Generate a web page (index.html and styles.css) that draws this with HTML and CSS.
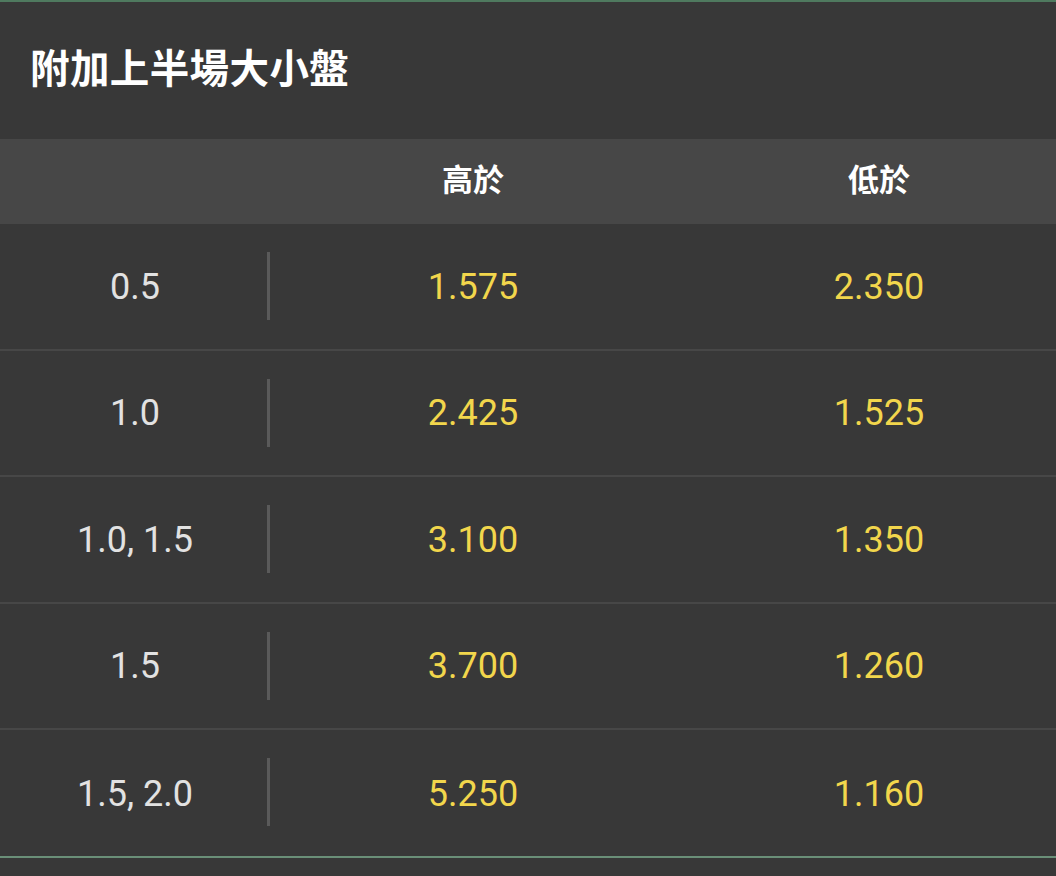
FILE: index.html
```html
<!DOCTYPE html>
<html lang="zh-Hant">
<head>
<meta charset="utf-8">
<link rel="stylesheet" href="styles.css">
</head>
<body>
<div class="panel">
  <div class="title">附加上半場大小盤</div>
  <div class="thead">
    <div class="cell"></div>
    <div class="cell">高於</div>
    <div class="cell">低於</div>
  </div>
  <div class="row">
    <div class="cell line">0.5</div>
    <div class="cell odd">1.575</div>
    <div class="cell odd">2.350</div>
  </div>
  <div class="row">
    <div class="cell line">1.0</div>
    <div class="cell odd">2.425</div>
    <div class="cell odd">1.525</div>
  </div>
  <div class="row">
    <div class="cell line">1.0, 1.5</div>
    <div class="cell odd">3.100</div>
    <div class="cell odd">1.350</div>
  </div>
  <div class="row">
    <div class="cell line">1.5</div>
    <div class="cell odd">3.700</div>
    <div class="cell odd">1.260</div>
  </div>
  <div class="row last">
    <div class="cell line">1.5, 2.0</div>
    <div class="cell odd">5.250</div>
    <div class="cell odd">1.160</div>
  </div>
</div>
</body>
</html>
```

FILE: styles.css
```css
html, body {
  margin: 0;
  padding: 0;
  background: #383838;
  overflow: hidden;
}
body {
  width: 1056px;
  height: 876px;
  font-family: Roboto, "Noto Sans CJK TC", sans-serif;
}
.panel {
  border-top: 2px solid #4f7a5f;
  border-bottom: 2px solid #6a8f78;
  background: #383838;
}
.title {
  height: 137px;
  box-sizing: border-box;
  padding-left: 30px;
  display: flex;
  align-items: center;
  padding-bottom: 10px;
  color: #ffffff;
  font-family: "Noto Sans CJK TC", sans-serif;
  font-weight: 700;
  font-size: 39.5px;
  letter-spacing: 0.4px;
}
.thead, .row {
  display: grid;
  grid-template-columns: 270px 406px 406px;
}
.thead {
  height: 85px;
  background: #474747;
  color: #ffffff;
  font-family: "Noto Sans CJK TC", sans-serif;
  font-weight: 700;
  font-size: 31px;
}
.thead .cell {
  display: flex;
  align-items: center;
  justify-content: center;
  padding-bottom: 8px;
}
.row {
  height: 124.5px;
  border-bottom: 2px solid #474747;
}
.row.last {
  border-bottom: none;
  height: 126px;
}
.row .cell {
  display: flex;
  align-items: center;
  justify-content: center;
  font-size: 36px;
  padding-top: 1px;
}
.line {
  color: #e2e2e2;
  position: relative;
}
.line::after {
  content: "";
  position: absolute;
  right: 0;
  top: 28px;
  height: 68px;
  width: 3px;
  background: #5a5a5a;
}
.odd {
  color: #f2d64c;
}
```
